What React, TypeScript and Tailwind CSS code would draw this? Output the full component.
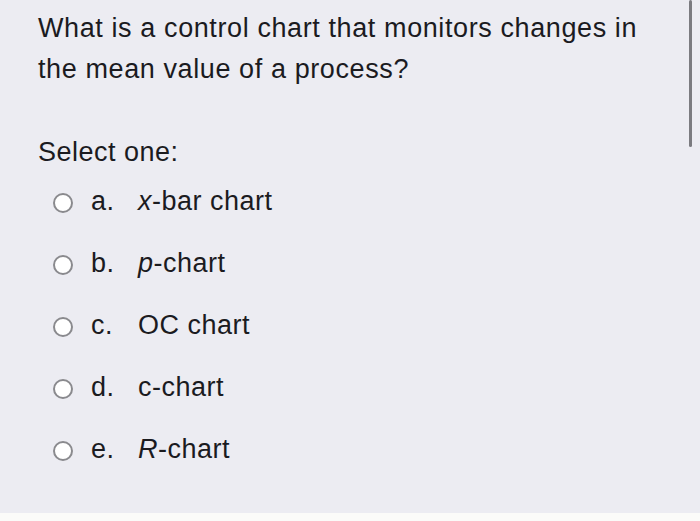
const options: { letter: string; italic?: string; rest: string }[] = [
  { letter: "a.", italic: "x", rest: "-bar chart" },
  { letter: "b.", italic: "p", rest: "-chart" },
  { letter: "c.", rest: "OC chart" },
  { letter: "d.", rest: "c-chart" },
  { letter: "e.", italic: "R", rest: "-chart" },
];

export default function App() {
  return (
    <div className="relative flex h-[521px] w-[700px] flex-col overflow-hidden bg-[#fbfbf9] font-['Liberation_Sans',Arial,sans-serif] text-[#1b1b1f]">
      <div className="h-[513px] bg-[#ececf2] pl-[38px] pt-[8px]">
        <p className="w-[630px] text-[27px] leading-[41px] tracking-[0.6px]">
          What is a control chart that monitors changes in the mean value of a process?
        </p>
        <p className="mt-[42px] text-[27px] leading-[41px] tracking-[0.5px]">Select one:</p>
        <div className="mt-[-3px] flex flex-col">
          {options.map((o) => (
            <div key={o.letter} className="flex h-[62px] items-center">
              <span className="ml-[15px] h-[20px] w-[20px] translate-y-[2px] rounded-full border-[2px] border-[#8a8a8e] bg-white" />
              <span className="ml-[18px] w-[47px] text-[27px] tracking-[0.5px]">{o.letter}</span>
              <span className="text-[27px] tracking-[0.5px]">
                {o.italic ? <i>{o.italic}</i> : null}
                {o.rest}
              </span>
            </div>
          ))}
        </div>
      </div>
      <div className="absolute right-[8px] top-0 h-[147px] w-[3px] rounded-full bg-[#7b7b80]" />
    </div>
  );
}
